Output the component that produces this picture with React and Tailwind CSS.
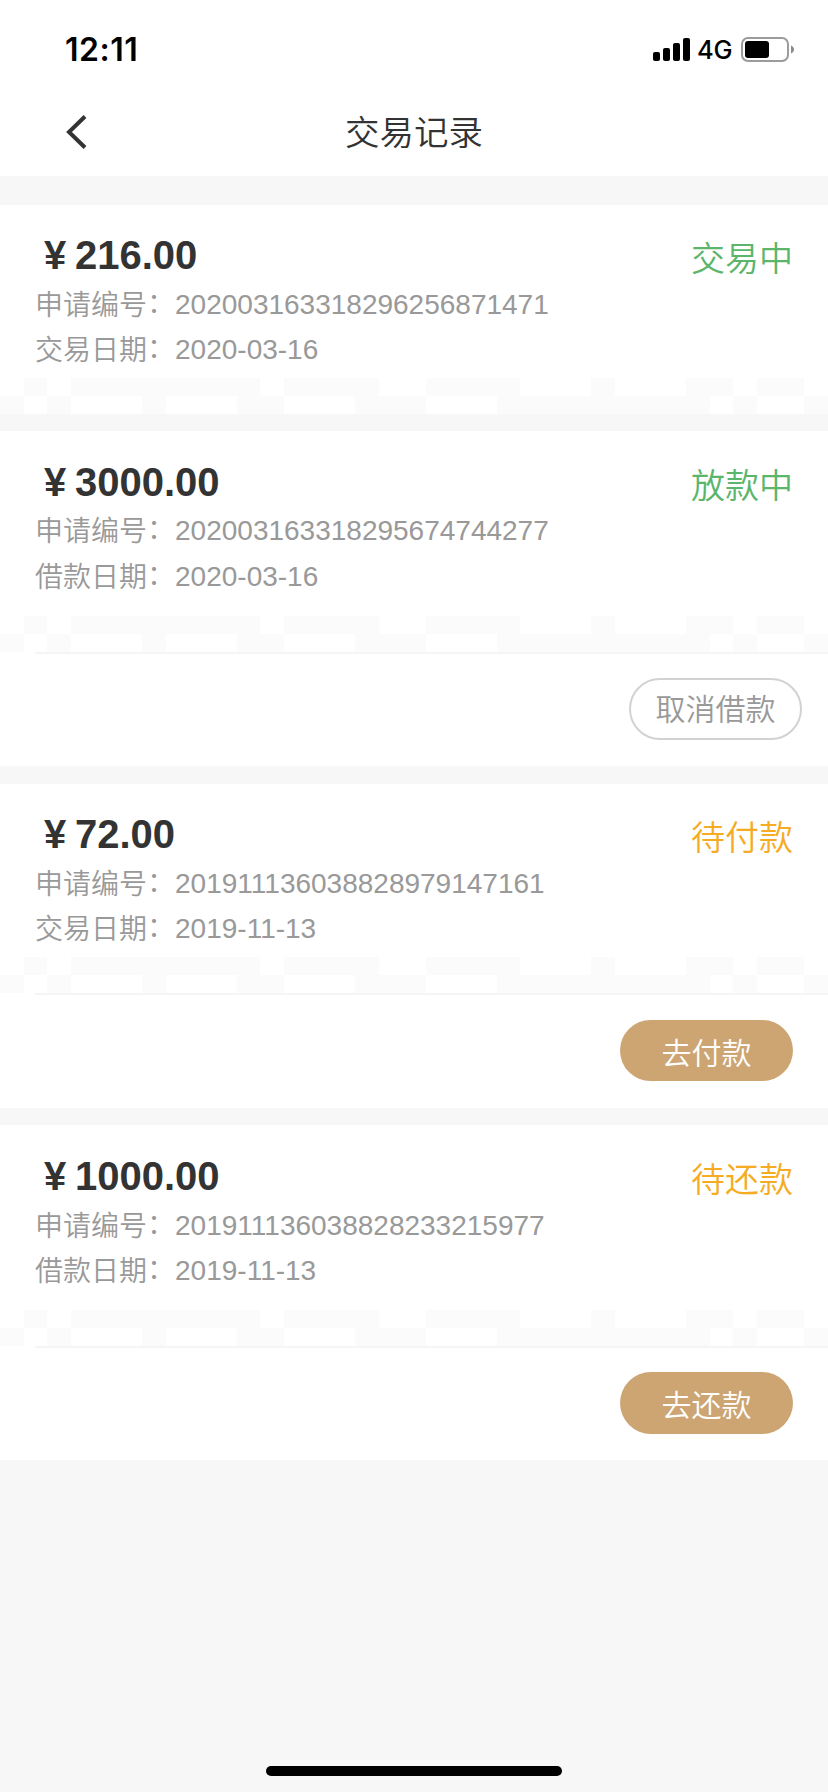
const records = [
  { amount: '216.00', id: '202003163318296256871471', label: '交易日期', date: '2020-03-16', status: '交易中', tone: 'text-[#5bb56b]', top: 'h-[173px] pt-6', amountHeight: 'h-[53px]', dateHeight: 'leading-[45px]' },
  { amount: '3000.00', id: '202003163318295674744277', label: '借款日期', date: '2020-03-16', status: '放款中', tone: 'text-[#5bb56b]', top: 'h-[185px] pt-[25px]', amountHeight: 'h-[52px]', dateHeight: 'leading-[47px]', action: '取消借款', outline: true, bottom: 'h-[112px] pt-6', button: 'h-[62px]', gap: 'mt-[17px]' },
  { amount: '72.00', id: '201911136038828979147161', label: '交易日期', date: '2019-11-13', status: '待付款', tone: 'text-[#f5ab23]', top: 'h-[173px] pt-6', amountHeight: 'h-[53px]', dateHeight: 'leading-[45px]', action: '去付款', bottom: 'h-[113px] pt-[25px]', button: 'h-[61px]', gap: 'mt-[18px]' },
  { amount: '1000.00', id: '201911136038828233215977', label: '借款日期', date: '2019-11-13', status: '待还款', tone: 'text-[#f5ab23]', top: 'h-[185px] pt-[25px]', amountHeight: 'h-[53px]', dateHeight: 'leading-[45px]', action: '去还款', bottom: 'h-[112px] pt-6', button: 'h-[62px]', gap: 'mt-[17px]' },
];

// Decorative skyline, in tiles: [column, row, tiles wide]
const tiles = [
  [1, 0, 1], [3, 0, 8], [12, 0, 4], [18, 0, 4], [25, 0, 1], [29, 0, 2], [32, 0, 2],
  [0, 1, 1], [2, 1, 1], [6, 1, 1], [10, 1, 2], [15, 1, 3], [21, 1, 9], [31, 1, 1], [34, 1, 1],
];

function Skyline() {
  return (
    <svg className="block h-9 w-full" viewBox="0 0 35 2" preserveAspectRatio="none" shapeRendering="crispEdges">
      {tiles.map(([x, y, w]) => (
        <rect key={`${x}-${y}`} x={x} y={y} width={w} height="1" fill="#fbfbfb" />
      ))}
    </svg>
  );
}

function StatusBar() {
  return (
    <div className="flex h-[88px] items-start justify-between pl-[65px] pr-[33px] text-black">
      <span className="mt-[30px] font-['Inter'] text-[32px] font-semibold leading-10 tracking-[0.5px]">12:11</span>
      <div className="mt-[37px] flex items-start">
        <svg width="38" height="24" viewBox="0 0 38 24">
          <rect x="0" y="15" width="7" height="9" rx="2" />
          <rect x="10" y="11" width="7" height="13" rx="2" />
          <rect x="20" y="6" width="7" height="18" rx="2" />
          <rect x="30" y="1" width="7" height="23" rx="2" />
        </svg>
        <span className="ml-[6px] -mt-[1px] w-[39px] whitespace-nowrap font-['Inter'] text-[25.5px] font-medium leading-7 tracking-[-0.2px]">4G</span>
        <svg className="ml-[5px]" width="54" height="25" viewBox="0 0 54 25">
          <rect x="1" y="1" width="46" height="23" rx="6" fill="none" stroke="#9b9b9b" strokeWidth="2" />
          <rect x="4" y="4" width="24" height="17" rx="3" />
          <path d="M50 8.500c4 1.500 4 6.500 0 8z" fill="#8b8b8b" />
        </svg>
      </div>
    </div>
  );
}

function Field({ label, value, leading }) {
  return (
    <p className={`flex h-[45px] text-[28px] text-[#999] ${leading}`}>
      <span className="pt-px">{label}</span>
      <span className="-mt-px">：</span>
      <span>{value}</span>
    </p>
  );
}

function Record({ item }) {
  return (
    <section className={`bg-white ${item.gap || ''}`}>
      <div className={`flex justify-between px-[35px] ${item.top}`}>
        <div>
          <div className={`flex text-[40px] font-bold leading-[52px] text-[#333] ${item.amountHeight}`}>
            <span className="w-10 text-center">¥</span>
            <span>{item.amount}</span>
          </div>
          <Field label="申请编号" value={item.id} leading="leading-[45px]" />
          <Field label={item.label} value={item.date} leading={item.dateHeight} />
        </div>
        <span className={`pt-[2px] text-[34px] leading-[56px] ${item.tone}`}>{item.status}</span>
      </div>
      <Skyline />
      {item.action && (
        <>
          <div className="ml-[35px] h-[2px] bg-[#f5f5f5]" />
          <div className={`flex justify-end ${item.bottom} ${item.outline ? 'pr-[26px]' : 'pr-[35px]'}`}>
            <button
              className={`flex w-[173px] items-center justify-center rounded-full text-[30px] ${item.button} ${
                item.outline ? 'border-2 border-[#d2d2d2] pt-px text-[#999]' : 'bg-[#cca573] pt-[5px] text-white'
              }`}
            >
              {item.action}
            </button>
          </div>
        </>
      )}
    </section>
  );
}

export default function App() {
  return (
    <div className="flex h-[1792px] w-[828px] flex-col overflow-hidden bg-[#f7f7f7] font-['Liberation_Sans','Noto_Sans_CJK_SC',sans-serif] font-[350]">
      <header className="h-44 shrink-0 bg-white">
        <StatusBar />
        <div className="grid h-[88px] grid-cols-[1fr_auto_1fr] items-center">
          <svg className="ml-[65px]" width="22" height="34" viewBox="0 0 22 34" fill="none" stroke="#333" strokeWidth="4">
            <path d="M20 1.500 4 17l16 15.500" />
          </svg>
          <h1 className="pt-px text-[34.5px] leading-[48px] text-[#333]">交易记录</h1>
        </div>
      </header>
      <main className="mt-[29px]">
        {records.map((item) => (
          <Record key={item.id} item={item} />
        ))}
      </main>
      <div className="mb-4 mt-auto h-[10px] w-[296px] self-center rounded-full bg-black" />
    </div>
  );
}
